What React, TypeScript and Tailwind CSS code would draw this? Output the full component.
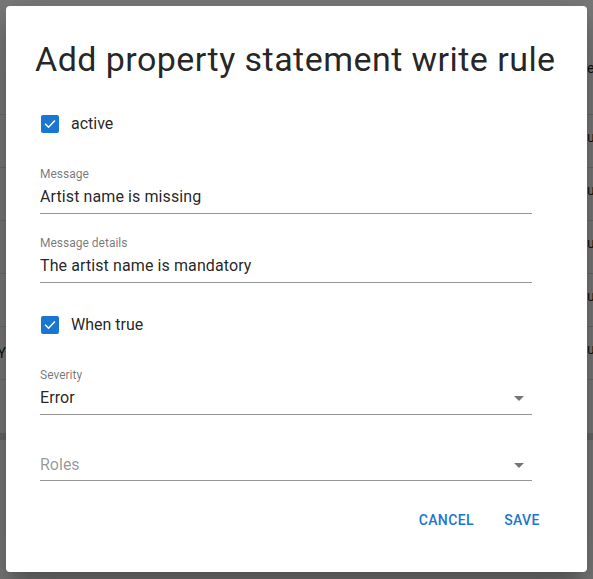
import React from "react";

const font = { fontFamily: "Roboto, 'Liberation Sans', sans-serif" };

const rows = ["u", "u", "u", "u", "u"];

const Checked: React.FC<{ label: string }> = ({ label }) => (
  <label className="flex items-center h-[42px]">
    <span className="w-[18px] h-[18px] ml-[1px] rounded-[2px] bg-[#1976d2] flex items-center justify-center">
      <svg width="14" height="14" viewBox="0 0 24 24" fill="none">
        <path d="M4.5 12.5l5 5 10-10.5" stroke="white" strokeWidth="2.6" strokeLinecap="square" />
      </svg>
    </span>
    <span className="ml-[12px] text-[16px] text-black/[0.87]">{label}</span>
  </label>
);

const ArrowDrop = () => (
  <svg width="24" height="24" viewBox="0 0 24 24" className="text-black/[0.54]">
    <path d="M7 10l5 5 5-5z" fill="currentColor" />
  </svg>
);

const Field: React.FC<{ label: string; value: string; select?: boolean }> = ({ label, value, select }) => (
  <div className="w-[492px] mt-[21px]">
    <div className="text-[12px] leading-[16px] text-black/[0.55]">{label}</div>
    <div className="mt-[3px] flex items-center justify-between h-[24px] text-[16px] text-black/[0.87] tracking-[0.1px]">
      <span>{value}</span>
      {select && (
        <span className="mr-[1px]">
          <ArrowDrop />
        </span>
      )}
    </div>
    <div className="mt-[4px] border-b border-black/[0.42]" />
  </div>
);

export default function App() {
  return (
    <div className="relative w-[593px] h-[579px] overflow-hidden bg-white" style={font}>
      {/* page underneath */}
      <div className="flex flex-col">
        <div className="h-[115px] flex items-center text-[14px] text-black/[0.87] border-b border-black/[0.12]">
          <span className="w-[587px] shrink-0" />
          <span className="mt-[22px]">e</span>
        </div>
        {rows.map((r, i) => (
          <div key={i} className="h-[53px] flex items-center text-[14px] text-black/[0.87] border-b border-black/[0.12]">
            <span className="w-[587px] shrink-0 flex justify-end overflow-hidden">
              {i === 4 && <span className="mr-[581px]">Y</span>}
            </span>
            <span className="-mt-[8px]">{r}</span>
          </div>
        ))}
        <div className="h-[53px]" />
        <div className="h-[7px] bg-black/[0.15]" />
      </div>

      {/* overlay + dialog */}
      <div className="absolute inset-0 bg-black/[0.52] p-[6px]">
        <div className="w-[581px] h-[566px] bg-white rounded-[4px] shadow-[0_11px_15px_-7px_rgba(0,0,0,0.2),0_24px_38px_3px_rgba(0,0,0,0.14),0_9px_46px_8px_rgba(0,0,0,0.12)] pl-[34px] pr-[33px] pt-[32px] flex flex-col">
          <h2 className="-ml-[5px] text-[34px] leading-[42px] font-normal text-black/[0.87] tracking-[0.45px] whitespace-nowrap">
            Add property statement write rule
          </h2>
          <div className="mt-[23px]">
            <Checked label="active" />
          </div>
          <Field label="Message" value="Artist name is missing" />
          <Field label="Message details" value="The artist name is mandatory" />
          <div className="mt-[21px]">
            <Checked label="When true" />
          </div>
          <Field label="Severity" value="Error" select />
          <div className="w-[492px] mt-[38px]">
            <div className="flex items-center justify-between h-[24px] text-[16px] text-black/[0.42]">
              <span>Roles</span>
              <span className="mr-[1px]">
                <ArrowDrop />
              </span>
            </div>
            <div className="mt-[3px] border-b border-black/[0.42]" />
          </div>
          <div className="mt-[21px] flex justify-end gap-[8px]">
            <button className="h-[36px] min-w-[64px] px-[8px] text-[14px] font-medium tracking-[0.4px] uppercase text-[#1976d2]">
              Cancel
            </button>
            <button className="h-[36px] min-w-[64px] px-[8px] text-[14px] font-medium tracking-[0.4px] uppercase text-[#1976d2]">
              Save
            </button>
          </div>
        </div>
      </div>
    </div>
  );
}
